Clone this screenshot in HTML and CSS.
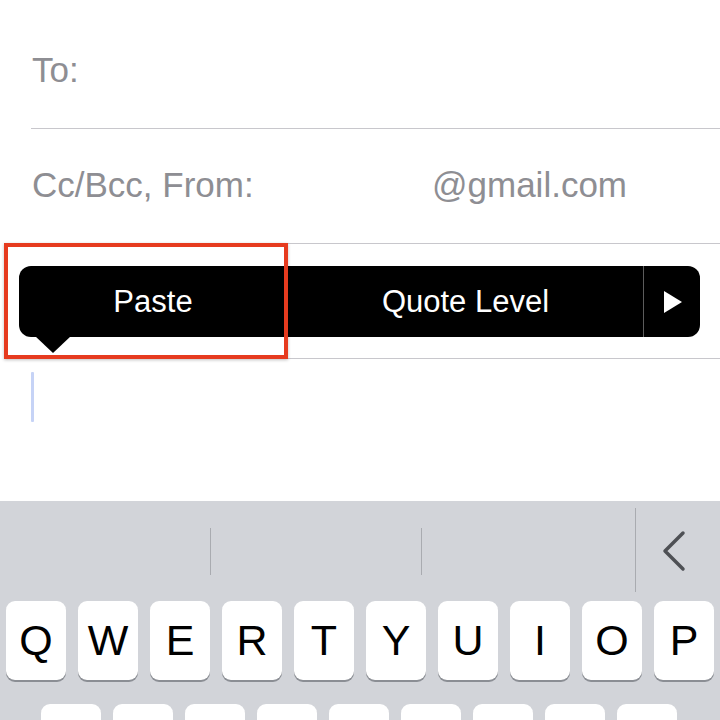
FILE: index.html
```html
<!DOCTYPE html>
<html lang="en">
<head>
    <meta charset="UTF-8">
    <meta name="viewport" content="width=device-width, initial-scale=1.0">
    <title>New Message</title>
    <link rel="stylesheet" href="styles.css">
</head>
<body>
    <div class="sheet">
        <div class="field field-to">
            <span class="field-label">To:</span>
        </div>

        <div class="field field-from">
            <span class="field-label wide">Cc/Bcc, From:</span>
            <span class="field-value">@gmail.com</span>
        </div>

        <div class="field field-subject">
            <!-- edit menu shown over the subject line -->
            <div class="edit-menu">
                <div class="menu-item paste">Paste</div>
                <div class="menu-item quote">Quote Level</div>
                <div class="menu-item more">
                    <svg class="more-icon" viewBox="0 0 18 22">
                        <path d="M0 0 L18 11 L0 22 Z"/>
                    </svg>
                </div>
                <span class="menu-arrow"></span>
            </div>
        </div>

        <div class="compose">
            <span class="caret"></span>
        </div>

        <div class="highlight"></div>

        <div class="keyboard">
            <div class="suggestions">
                <div class="suggest-cell"></div>
                <span class="suggest-divider"></span>
                <div class="suggest-cell"></div>
                <span class="suggest-divider"></span>
                <div class="suggest-cell last"></div>
                <span class="suggest-divider tall"></span>
                <div class="suggest-toggle">
                    <svg class="chevron" viewBox="0 0 24 42">
                        <path d="M21 3 L3 21 L21 39"/>
                    </svg>
                </div>
            </div>

            <div class="key-row">
                <div class="key">Q</div>
                <div class="key">W</div>
                <div class="key">E</div>
                <div class="key">R</div>
                <div class="key">T</div>
                <div class="key">Y</div>
                <div class="key">U</div>
                <div class="key">I</div>
                <div class="key">O</div>
                <div class="key">P</div>
            </div>

            <div class="key-row second">
                <div class="key">A</div>
                <div class="key">S</div>
                <div class="key">D</div>
                <div class="key">F</div>
                <div class="key">G</div>
                <div class="key">H</div>
                <div class="key">J</div>
                <div class="key">K</div>
                <div class="key">L</div>
            </div>
        </div>
    </div>
</body>
</html>
```

FILE: styles.css
```css
* {
    margin: 0;
    padding: 0;
    box-sizing: border-box;
}

body {
    font-family: 'Liberation Sans', Arial, Helvetica, sans-serif;
    background: #fff;
    width: 720px;
    height: 720px;
    overflow: hidden;
}

.sheet {
    position: relative;
    width: 720px;
    height: 720px;
}

/* header fields */
.field {
    margin-left: 31px;
    padding-left: 1px;
    border-bottom: 1px solid #c8c7cc;
    display: flex;
    font-size: 35px;
    line-height: 40px;
    color: #8e8e93;
}

.field-to {
    height: 129px;
    padding-top: 50px;
}

.field-from {
    height: 115px;
    padding-top: 36px;
}

.field-subject {
    position: relative;
    height: 115px;
}

.field-label.wide {
    width: 400px;
}

/* edit menu */
.edit-menu {
    position: absolute;
    top: 22px;
    left: -12px;
    width: 681px;
    height: 71px;
    background: #000;
    border-radius: 12px;
    display: flex;
    color: #fff;
    font-size: 31px;
}

.menu-item {
    display: flex;
    align-items: center;
    justify-content: center;
}

.menu-item.paste {
    width: 268px;
}

.menu-item.quote {
    width: 356px;
    border-left: 1px solid #4a4a4a;
}

.menu-item.more {
    flex: 1;
    border-left: 1px solid #5c5c5c;
}

.more-icon {
    width: 18px;
    height: 22px;
    fill: #fff;
    margin-left: 2px;
}

.menu-arrow {
    position: absolute;
    left: 16px;
    top: 70px;
    width: 0;
    height: 0;
    border-left: 18px solid transparent;
    border-right: 18px solid transparent;
    border-top: 17px solid #000;
}

/* message body */
.compose {
    height: 142px;
    padding: 13px 0 0 31px;
}

.caret {
    display: block;
    width: 3px;
    height: 50px;
    background: #c6d3f6;
    border-radius: 1px;
}

.highlight {
    position: absolute;
    left: 4px;
    top: 243px;
    width: 284px;
    height: 116px;
    border: 4px solid #e63b1f;
    box-shadow: 0 1px 3px rgba(0, 0, 0, 0.25);
}

/* keyboard */
.keyboard {
    height: 219px;
    background: #d2d4d9;
    overflow: hidden;
}

.suggestions {
    height: 100px;
    display: flex;
    align-items: center;
}

.suggest-cell {
    width: 210px;
    height: 100%;
}

.suggest-cell.last {
    width: 213px;
}

.suggest-divider {
    width: 1px;
    height: 47px;
    background: #a9abb0;
}

.suggest-divider.tall {
    height: 84px;
    margin-top: -2px;
}

.suggest-toggle {
    flex: 1;
    display: flex;
    align-items: center;
    justify-content: center;
}

.chevron {
    width: 24px;
    height: 42px;
    fill: none;
    stroke: #4e5055;
    stroke-width: 3.5;
    stroke-linecap: round;
    stroke-linejoin: round;
    margin-right: 8px;
}

.key-row {
    display: flex;
    gap: 12px;
    padding-left: 6px;
}

.key-row.second {
    margin-top: 24px;
    padding-left: 41px;
}

.key {
    width: 60px;
    height: 79px;
    background: #fff;
    border-radius: 9px;
    box-shadow: 0 2px 0 #8b8e94;
    display: flex;
    align-items: center;
    justify-content: center;
    font-size: 43px;
    color: #000;
}
```
